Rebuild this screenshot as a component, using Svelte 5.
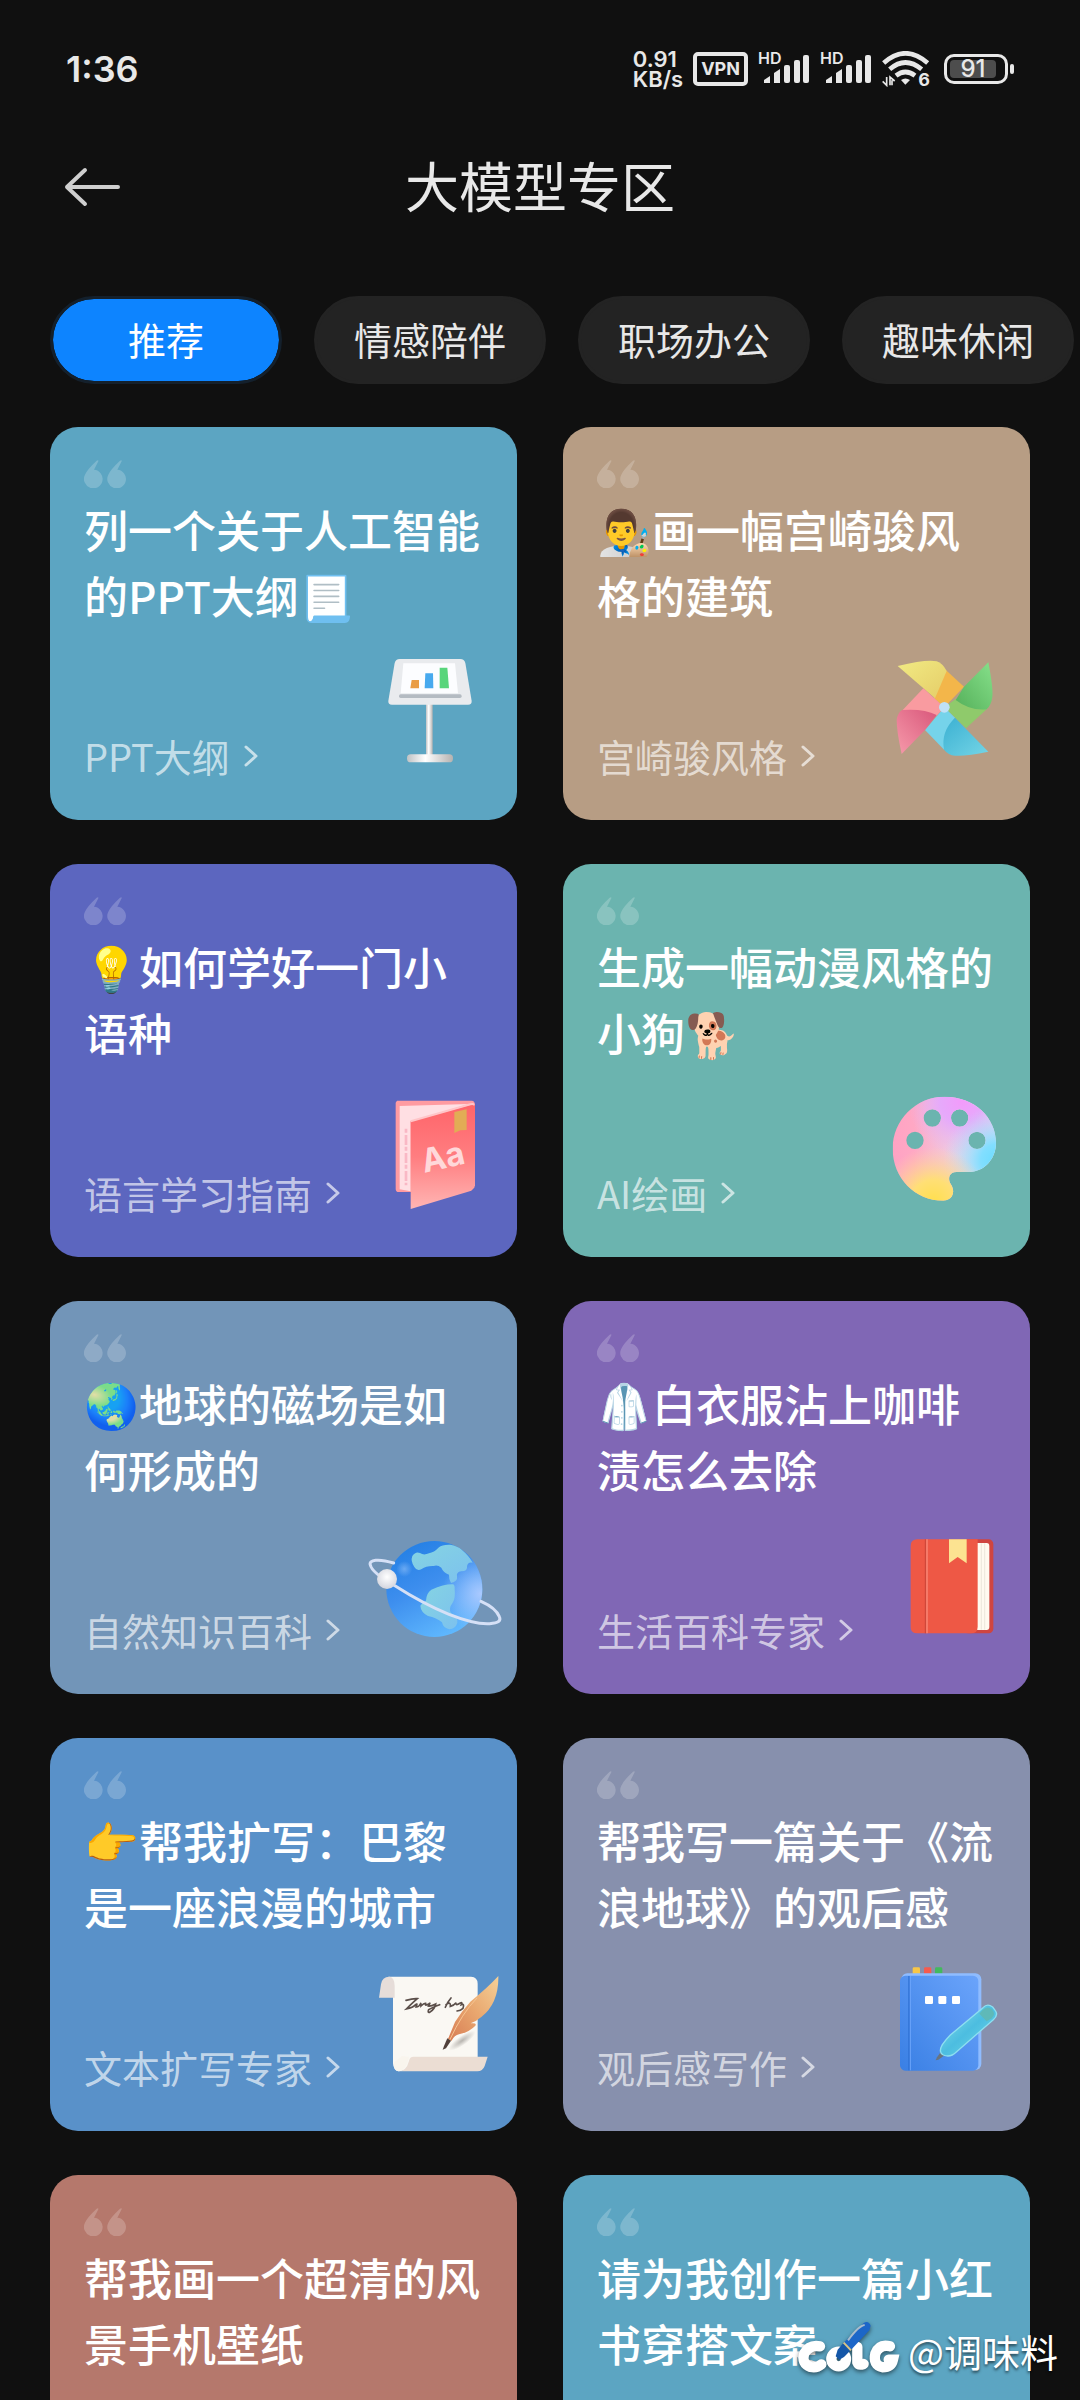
<script lang="ts">
	interface Card {
		title: string;
		label?: string;
		color: string;
		art?: string;
	}

	const tabs = ['推荐', '情感陪伴', '职场办公', '趣味休闲'];

	const cards: Card[] = [
		{ title: '列一个关于人工智能的PPT大纲📃', label: 'PPT大纲', color: '#5ca5c2', art: 'board' },
		{ title: '👨‍🎨画一幅宫崎骏风格的建筑', label: '宫崎骏风格', color: '#b79d84', art: 'pinwheel' },
		{ title: '💡如何学好一门小语种', label: '语言学习指南', color: '#5c66bf', art: 'dictionary' },
		{ title: '生成一幅动漫风格的小狗🐕', label: 'AI绘画', color: '#6bb4af', art: 'palette' },
		{ title: '🌏地球的磁场是如何形成的', label: '自然知识百科', color: '#7295b8', art: 'planet' },
		{ title: '🥼白衣服沾上咖啡渍怎么去除', label: '生活百科专家', color: '#8067b5', art: 'book' },
		{ title: '👉帮我扩写：巴黎是一座浪漫的城市', label: '文本扩写专家', color: '#5991c9', art: 'scroll' },
		{ title: '帮我写一篇关于《流浪地球》的观后感', label: '观后感写作', color: '#8790ad', art: 'notebook' },
		{ title: '帮我画一个超清的风景手机壁纸', color: '#b5786c' },
		{ title: '请为我创作一篇小红书穿搭文案', color: '#5ca5c2' }
	];

	let activeTab = $state('推荐');
</script>

{#snippet signal()}
	<div class="signal">
		<span>HD</span>
		<svg width="46" height="30" viewBox="0 0 46 30">
			<path d="M0 29v-3l6-4v7z M10 29V19l6-4v14z" />
			<rect x="20" y="11" width="6" height="18" rx="2" />
			<rect x="30" y="6" width="6" height="23" rx="2" />
			<rect x="39" y="1" width="6" height="28" rx="2" />
		</svg>
	</div>
{/snippet}

<div class="screen">
	<div class="status">
		<span class="clock">1:36</span>
		<div class="indicators">
			<div class="speed"><span>0.91</span><span>KB/s</span></div>
			<span class="vpn">VPN</span>
			{@render signal()}
			{@render signal()}
			<div class="wifi">
				<svg width="48" height="36" viewBox="0 0 144 108">
					<g fill="none" stroke="#e8e8e8" stroke-width="14">
						<path d="M5 36Q70-22 137 36" />
						<path d="M23 55Q70 14 119 55" />
						<path d="M42 74Q70 52 99 74" />
					</g>
					<path d="M57 87Q70 78 84 87L70 101z" fill="#e8e8e8" />
					<path d="M14 78v25L2 91M24 103V78l14 12M30 88v15" fill="none" stroke="#e8e8e8" stroke-width="5" />
				</svg>
				<span>6</span>
			</div>
			<div class="battery"><span>91</span></div>
		</div>
	</div>

	<header>
		<button class="back" aria-label="返回">
			<svg width="56" height="40" viewBox="0 0 56 40">
				<path d="M21 3L3 20l18 17M3 20h51" fill="none" stroke="#cfcfcf" stroke-width="4" stroke-linecap="round" stroke-linejoin="round" />
			</svg>
		</button>
		<h1>大模型专区</h1>
	</header>

	<nav>
		{#each tabs as tab}
			<button class="tab" class:active={tab === activeTab} onclick={() => (activeTab = tab)}>{tab}</button>
		{/each}
	</nav>

	<main>
		{#each cards as card}
			<a class="card" href="#chat" style="background-color: {card.color}">
				<svg class="quote" width="42" height="28" viewBox="0 0 126 84">
					<path d="M38 2Q44-2 43 4L30 29A28 28 0 1 1 3 44Q10 28 38 2z" />
					<path d="M108 2Q114-2 113 4L100 29A28 28 0 1 1 73 44Q80 28 108 2z" />
				</svg>
				<h2>{card.title}</h2>
				{#if card.label}
					<div class="foot">
						<span class="label">
							{card.label}
							<svg width="14" height="22" viewBox="0 0 14 22">
								<path d="M2 2l10 9-10 9" fill="none" stroke="currentColor" stroke-width="3" stroke-linecap="round" stroke-linejoin="round" />
							</svg>
						</span>
						<svg class="art" viewBox="0 0 408 384">
							{#if card.art === 'board'}
								<defs>
									<linearGradient id="metal">
										<stop offset="0" stop-color="#bfc2c4" />
										<stop offset="0.4" stop-color="#ffffff" />
										<stop offset="1" stop-color="#b5b2b0" />
									</linearGradient>
								</defs>
								<rect x="177" y="146" width="20" height="158" fill="url(#metal)" />
								<rect x="120" y="298" width="138" height="24" rx="11" fill="url(#metal)" />
								<path d="M98 12H280Q292 12 295 24L314 138Q315 149 303 149H75Q63 149 64 138L83 24Q86 12 98 12z" fill="#e9ebee" />
								<path d="M109 25H264L273 115H101z" fill="#fcfdff" />
								<rect x="96" y="118" width="188" height="11" rx="5" fill="#b4bbc2" />
								<path d="M134 75h22v25h-26z" fill="#e99c45" />
								<path d="M175 55h23l1 45h-26z" fill="#47a9ee" />
								<path d="M218 38h23l5 62h-28z" fill="#58d57b" />
							{:else if card.art === 'pinwheel'}
								<defs>
									<linearGradient id="pwYellow" x1="0" y1="0" x2="1" y2="1">
										<stop offset="0" stop-color="#f1ea83" />
										<stop offset="1" stop-color="#e5cd68" />
									</linearGradient>
									<linearGradient id="pwGreen" x1="1" y1="0" x2="0" y2="1">
										<stop offset="0" stop-color="#86e08a" />
										<stop offset="1" stop-color="#55b05a" />
									</linearGradient>
									<linearGradient id="pwBlue" x1="0" y1="0" x2="1" y2="1">
										<stop offset="0" stop-color="#3bb0d2" />
										<stop offset="1" stop-color="#74d5e6" />
									</linearGradient>
									<linearGradient id="pwPink" x1="1" y1="0" x2="0" y2="1">
										<stop offset="0" stop-color="#d9577b" />
										<stop offset="1" stop-color="#f69aaa" />
									</linearGradient>
								</defs>
								<path d="M195 43L252 95 193 157 162 130z" fill="#f3b64a" />
								<path d="M53 33Q140 12 170 19 188 25 200 48L165 130z" fill="url(#pwYellow)" />
								<path d="M320 163L258 220 193 157 227 132z" fill="#8fca6b" />
								<path d="M325 22Q340 100 337 125 334 150 320 163 270 168 227 135L252 95z" fill="url(#pwGreen)" />
								<path d="M193 285L135 225 193 157 225 188z" fill="#75d3ea" />
								<path d="M325 290Q260 304 225 302 205 300 192 284 182 230 225 188z" fill="url(#pwBlue)" />
								<path d="M66 167L130 100 193 157 170 182z" fill="#f99ba0" />
								<path d="M65 297Q50 230 50 195 52 175 66 165 130 160 170 180L135 225z" fill="url(#pwPink)" />
								<circle cx="193" cy="157" r="16" fill="#bfe1f6" />
							{:else if card.art === 'dictionary'}
								<defs>
									<linearGradient id="cover" x1="0" y1="0" x2="0" y2="1">
										<stop offset="0" stop-color="#ff6469" />
										<stop offset="0.5" stop-color="#ff7d80" />
										<stop offset="1" stop-color="#ffb5b3" />
									</linearGradient>
								</defs>
								<path d="M90 26H314Q324 26 324 40V280L131 300H95Q86 300 86 290V32z" fill="#ff9ba1" />
								<path d="M98 42L306 36 131 88V298L98 292z" fill="#ffdfe3" />
								<path d="M117 110v170" stroke="#f9b8c5" stroke-width="8" stroke-dasharray="12 7 30 5" />
								<path d="M131 88L324 35V280Q322 292 308 298L131 351z" fill="url(#cover)" />
								<path d="M131 88L310 37Q320 34 321 40" fill="none" stroke="#ffc5c8" stroke-width="6" />
								<path d="M262 60l37-8v62l-19 1-18 8z" fill="#e2ac55" />
								<text x="172" y="243" font-size="98" font-weight="700" fill="#ffd8da" font-family="Inter, sans-serif" transform="rotate(-13 172 243)">Aa</text>
							{:else if card.art === 'palette'}
								<defs>
									<radialGradient id="pBlue" gradientUnits="userSpaceOnUse" cx="350" cy="205" r="160">
										<stop offset="0" stop-color="#6bdcff" />
										<stop offset="0.3" stop-color="#82deff" />
										<stop offset="1" stop-color="#c6dcf8" stop-opacity="0" />
									</radialGradient>
									<radialGradient id="pViolet" gradientUnits="userSpaceOnUse" cx="245" cy="30" r="160">
										<stop offset="0" stop-color="#f29bfb" />
										<stop offset="0.4" stop-color="#e6a9fb" />
										<stop offset="1" stop-color="#e4b5f5" stop-opacity="0" />
									</radialGradient>
									<radialGradient id="pYellow" gradientUnits="userSpaceOnUse" cx="160" cy="330" r="165">
										<stop offset="0" stop-color="#ffdf4d" />
										<stop offset="0.4" stop-color="#ffdf75" />
										<stop offset="1" stop-color="#ffd5a5" stop-opacity="0" />
									</radialGradient>
									<linearGradient id="pBase">
										<stop offset="0" stop-color="#ff9fc3" />
										<stop offset="0.25" stop-color="#ffa8c4" />
										<stop offset="0.7" stop-color="#e8e0f0" />
									</linearGradient>
									<clipPath id="pShape">
										<path
											clip-rule="evenodd"
											d="M194 14C285 14 348 78 348 152 348 202 312 240 265 240H230C208 240 204 258 210 272L216 283C226 305 214 326 190 326 105 326 38 258 38 170 38 84 107 14 194 14z
											M131 78a26 26 0 1 0 52 0a26 26 0 1 0-52 0z M213 78a26 26 0 1 0 52 0a26 26 0 1 0-52 0z
											M79 145a26 26 0 1 0 52 0a26 26 0 1 0-52 0z M265 145a26 26 0 1 0 52 0a26 26 0 1 0-52 0z"
										/>
									</clipPath>
								</defs>
								<g clip-path="url(#pShape)">
									<rect width="408" height="384" fill="url(#pBase)" />
									<rect width="408" height="384" fill="url(#pViolet)" />
									<rect width="408" height="384" fill="url(#pBlue)" />
									<rect width="408" height="384" fill="url(#pYellow)" />
								</g>
							{:else if card.art === 'planet'}
								<defs>
									<linearGradient id="sea" x1="0.2" y1="0" x2="0.7" y2="1">
										<stop offset="0" stop-color="#237fe4" />
										<stop offset="0.45" stop-color="#3d8eee" />
										<stop offset="1" stop-color="#62bbff" />
									</linearGradient>
									<linearGradient id="land" x1="0" y1="0" x2="1" y2="1">
										<stop offset="0" stop-color="#85d4e2" />
										<stop offset="1" stop-color="#7cc1ee" />
									</linearGradient>
									<radialGradient id="shine" cx="0.98" cy="0.55" r="0.4">
										<stop offset="0" stop-color="#a9c9ff" />
										<stop offset="1" stop-color="#a9c9ff" stop-opacity="0" />
									</radialGradient>
									<radialGradient id="moon" cx="0.5" cy="0.4" r="0.6">
										<stop offset="0" stop-color="#ffffff" />
										<stop offset="1" stop-color="#d3d5de" />
									</radialGradient>
									<radialGradient id="glow">
										<stop offset="0" stop-color="#78b2f5" stop-opacity="0.8" />
										<stop offset="1" stop-color="#78b2f5" stop-opacity="0" />
									</radialGradient>
								</defs>
								<circle cx="202" cy="180" r="144" fill="url(#sea)" />
								<circle cx="202" cy="180" r="144" fill="url(#shine)" />
								<circle cx="112" cy="120" r="24" fill="url(#glow)" />
								<path d="M216 55Q225 46 250 47 272 51 284 62 306 80 317 101 302 98 300 112 303 127 283 127 267 129 270 143 273 156 252 162 245 147 246 137 229 131 223 116 211 106 200 111 178 110 164 120 150 128 142 114 130 96 136 81 146 66 159 72 170 80 186 73 201 71 216 55z" fill="url(#land)" />
								<path d="M255 166Q264 164 263 180 266 209 257 221 244 238 252 252 274 265 271 282 265 300 247 301 228 297 225 280 209 266 183 261 161 249 160 230 168 218 177 215 178 192 193 182 230 166 255 166z" fill="url(#land)" />
								<path d="M80 102C35 88 4 92 10 108 14 127 46 149 85 171 138 205 189 233 246 256 297 276 338 286 368 284 394 282 403 276 397 263 389 243 367 228 342 217" fill="none" stroke="#d5e0f6" stroke-width="9" stroke-linecap="round" />
								<circle cx="60" cy="150" r="30" fill="url(#moon)" />
							{:else if card.art === 'book'}
								<rect x="250" y="31" width="90" height="282" rx="14" fill="#cf4540" />
								<path d="M280 42h40q8 0 8 9v243q0 9-8 9h-40z" fill="#fffaf0" />
								<path d="M304 43v259M314 43v259" stroke="#e3ddd2" stroke-width="2" />
								<path d="M112 31H293V293Q293 313 273 313H112Q92 313 92 295V51Q92 31 112 31z" fill="#ee5845" />
								<path d="M136 31v282" stroke="#c94438" stroke-width="3" />
								<path d="M141 31v282" stroke="#fa8c7a" stroke-width="4" />
								<path d="M207 31h53v72l-27-19-26 19z" fill="#fce391" />
							{:else if card.art === 'scroll'}
								<defs>
									<linearGradient id="feather" x1="1" y1="0" x2="0" y2="1">
										<stop offset="0" stop-color="#f5d198" />
										<stop offset="0.5" stop-color="#e9a76f" />
										<stop offset="1" stop-color="#d77c53" />
									</linearGradient>
									<radialGradient id="shade">
										<stop offset="0" stop-color="#8b8782" stop-opacity="0.6" />
										<stop offset="1" stop-color="#8b8782" stop-opacity="0" />
									</radialGradient>
								</defs>
								<path d="M64 32H312Q332 33 332 53V290L94 316Q79 312 78 292V70z" fill="#faf8f3" />
								<path d="M36 95L42 55Q45 32 67 32 83 34 83 60V95z" fill="#e6ddd9" />
								<path d="M126 285Q128 272 140 272H362L353 300Q347 316 331 316H94Q118 316 126 285z" fill="#ebddd3" />
								<path d="M94 316Q118 314 126 272L105 270 80 290Q80 315 94 316z" fill="#f9f5ed" />
								<ellipse cx="285" cy="224" rx="48" ry="14" fill="url(#shade)" transform="rotate(-35 285 224)" />
								<g fill="none" stroke="#5b4f4a" stroke-width="5" stroke-linecap="round">
									<path d="M117 103Q138 97 151 98 138 109 118 129 138 125 146 116 153 110 147 123 155 124 160 114 162 108 162 120 172 110 176 112 172 122 186 113 192 108 184 120 190 122 206 114 203 130 188 139 181 141 185 131 195 124 218 116" />
									<path d="M252 96Q240 110 235 124M237 116Q252 105 250 121 260 119 267 110 265 121 280 111 287 107 283 116 293 112 288 127 281 134 270 135" />
								</g>
								<path d="M394 30Q363 64 310 107 283 137 264 168L243 219 253 225Q263 207 276 205 307 198 325 179 331 170 311 172 329 165 343 153 396 111 394 30z" fill="url(#feather)" />
								<path d="M330 96Q285 142 248 222" fill="none" stroke="#f6c593" stroke-width="3" />
								<path d="M241 217L252 224 237 247 227 251 231 240z" fill="#51413b" />
							{:else if card.art === 'notebook'}
								<defs>
									<linearGradient id="blue" x1="1" y1="0" x2="0" y2="1">
										<stop offset="0" stop-color="#6ba4fb" />
										<stop offset="1" stop-color="#397fe4" />
									</linearGradient>
									<linearGradient id="pen" x1="0" y1="0" x2="1" y2="1">
										<stop offset="0" stop-color="#8de3ec" />
										<stop offset="0.5" stop-color="#4cbde0" />
										<stop offset="1" stop-color="#73dbe9" />
									</linearGradient>
								</defs>
								<rect x="98" y="4" width="22" height="30" rx="4" fill="#f7c647" />
								<rect x="132" y="4" width="22" height="30" rx="4" fill="#f55b4f" />
								<rect x="165" y="4" width="22" height="30" rx="4" fill="#43b95e" />
								<rect x="64" y="22" width="240" height="290" rx="18" fill="#8fbcff" />
								<rect x="60" y="29" width="235" height="285" rx="16" fill="url(#blue)" />
								<path d="M87 30v283" stroke="#2e6fd2" stroke-width="4" />
								<path d="M91 30v283" stroke="#6da5fb" stroke-width="3" />
								<rect x="135" y="90" width="24" height="24" rx="4" fill="#fff" />
								<rect x="175" y="90" width="24" height="24" rx="4" fill="#fff" />
								<rect x="216" y="90" width="24" height="24" rx="4" fill="#fff" />
								<path d="M184 256L194 268 175 281 167 283 171 274z" fill="#69747e" />
								<path d="M309 125Q322 111 338 123L346 134Q356 147 340 161L229 258Q211 276 190 267 174 259 187 236 198 220 211 207z" fill="url(#pen)" stroke="#8ddff0" stroke-width="4" />
								<path d="M308 132Q321 118 335 130 349 144 335 157L320 166 298 143z" fill="#5fb9b8" />
							{/if}
						</svg>
					</div>
				{/if}
			</a>
		{/each}
	</main>

	<div class="watermark">
		<svg width="102" height="56" viewBox="0 0 306 168">
			<g fill="none" stroke="#fff" stroke-width="31" stroke-linecap="round">
				<path d="M66 76Q34 70 19 97 9 128 38 138 56 142 70 130" />
				<circle cx="122" cy="114" r="22" />
				<path d="M178 78V124Q182 134 197 129" />
				<path d="M276 76Q244 68 232 98 224 132 254 139 280 139 285 116H272" />
			</g>
			<path d="M197 6Q212-2 218 14L214 28 158 88 136 66z" fill="#1c66c8" />
			<path d="M200 12Q182 14 150 58" fill="none" stroke="#a9bccb" stroke-width="6" />
			<path d="M136 66l22 22-20 20-14 8-11-10 6-20z" fill="#1557a8" />
			<path d="M137 65l22 23" stroke="#d9c485" stroke-width="6" />
		</svg>
		<span>@调味料</span>
	</div>
</div>

<style>
	:global(body) {
		background-color: #101010;
	}

	.screen {
		display: flex;
		flex-direction: column;
		height: 100vh;
		overflow: hidden;
		position: relative;
		background-color: #101010;
		color: #e8e8e8;
		font-family: 'Noto Sans CJK SC', sans-serif;
	}

	.status {
		display: flex;
		align-items: center;
		justify-content: space-between;
		height: 138px;
		padding: 0 72px 0 66px;
		box-sizing: border-box;
		font-family: Inter, sans-serif;
	}

	.clock {
		font-size: 36px;
		font-weight: 600;
	}

	.indicators {
		display: flex;
		align-items: center;
		gap: 10px;
	}

	.speed {
		display: flex;
		flex-direction: column;
		font-size: 22px;
		font-weight: 600;
		line-height: 20px;
	}

	.vpn {
		border: 4px solid #e8e8e8;
		border-radius: 5px;
		padding: 0 4px;
		font-size: 18px;
		font-weight: 700;
		line-height: 26px;
	}

	.signal {
		position: relative;
		display: flex;
		padding-left: 6px;
	}

	.signal span {
		position: absolute;
		left: 0;
		top: -4px;
		font-size: 16px;
		font-weight: 600;
		line-height: 16px;
	}

	.signal svg {
		fill: #e8e8e8;
	}

	.wifi {
		position: relative;
		display: flex;
	}

	.wifi span {
		position: absolute;
		right: 0;
		bottom: 0;
		font-size: 18px;
		font-weight: 700;
		line-height: 14px;
	}

	.battery {
		position: relative;
		width: 64px;
		height: 30px;
		margin-left: 4px;
		box-sizing: border-box;
		border: 3px solid #e8e8e8;
		border-radius: 10px;
		padding: 3px;
		font-size: 24px;
		font-weight: 500;
		line-height: 18px;
		text-align: center;
	}

	.battery span {
		display: block;
		margin-right: 6px;
		border-radius: 4px;
		background-color: #4d4d4d;
	}

	.battery::after {
		content: '';
		position: absolute;
		right: -9px;
		top: 7px;
		width: 4px;
		height: 10px;
		border-radius: 2px;
		background-color: #e8e8e8;
	}

	header {
		display: grid;
		grid-template-columns: 56px 1fr 56px;
		align-items: center;
		height: 98px;
		padding: 0 64px;
	}

	button {
		border: none;
		padding: 0;
		background: none;
		font-family: inherit;
		cursor: pointer;
	}

	.back svg {
		display: block;
	}

	h1 {
		margin: 0;
		padding-bottom: 4px;
		font-size: 54px;
		font-weight: 400;
		line-height: 80px;
		text-align: center;
	}

	nav {
		display: flex;
		gap: 32px;
		margin-top: 60px;
		padding: 0 50px;
		overflow: hidden;
	}

	.tab {
		flex: none;
		min-width: 232px;
		height: 88px;
		padding: 0 37px 4px;
		border: 3px solid #232323;
		border-radius: 44px;
		background-color: #232323;
		color: #e8e8e8;
		font-size: 38px;
	}

	.tab.active {
		border-color: #14202c;
		background-color: #0d84ff;
		background-clip: padding-box;
		color: #fff;
	}

	main {
		display: grid;
		grid-template-columns: 1fr 1fr;
		grid-auto-rows: max-content;
		gap: 44px 46px;
		flex: 1;
		min-height: 0;
		margin-top: 43px;
		padding: 0 50px;
		overflow: hidden;
	}

	.card {
		display: flex;
		flex-direction: column;
		min-height: 393px;
		padding: 33px 14px 37px 34px;
		box-sizing: border-box;
		border-radius: 28px;
		color: #fff;
		text-decoration: none;
	}

	.quote {
		flex: none;
		fill: #fff;
		opacity: 0.2;
	}

	h2 {
		margin: 8px 20px 0 0;
		font-size: 44px;
		font-weight: 500;
		line-height: 66px;
	}

	.foot {
		display: flex;
		align-items: flex-end;
		justify-content: space-between;
		margin-top: auto;
	}

	.label {
		display: flex;
		align-items: center;
		gap: 14px;
		padding-bottom: 2px;
		color: rgba(255, 255, 255, 0.65);
		font-size: 38px;
		font-weight: 400;
		line-height: 50px;
	}

	.art {
		width: 136px;
		height: 128px;
		margin-top: -8px;
	}

	.watermark {
		position: absolute;
		right: 22px;
		bottom: 23px;
		display: flex;
		align-items: flex-end;
		gap: 8px;
		color: #fff;
		font-size: 38px;
		line-height: 52px;
		text-shadow: 0 2px 3px rgba(0, 0, 0, 0.6);
	}

	.watermark svg {
		filter: drop-shadow(0 2px 2px rgba(0, 0, 0, 0.5));
	}
</style>
